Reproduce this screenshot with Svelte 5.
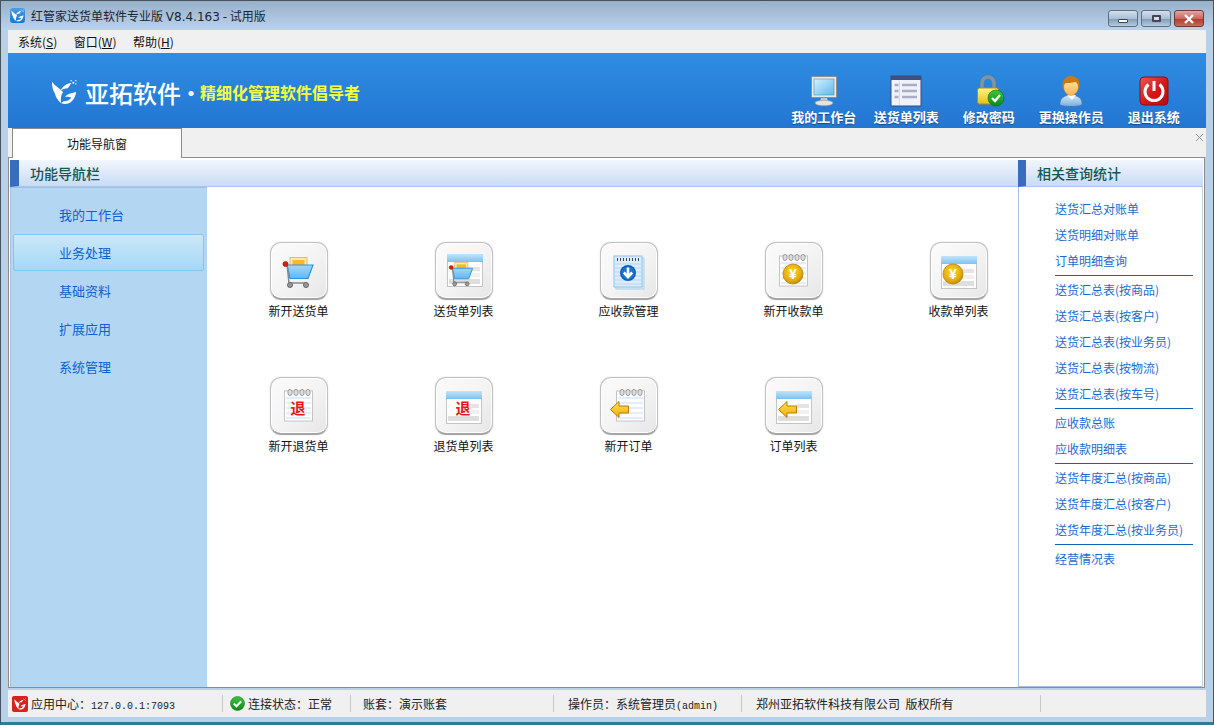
<script>
  const tools = [
    { id: 'monitor', label: '我的工作台' },
    { id: 'list', label: '送货单列表' },
    { id: 'lock', label: '修改密码' },
    { id: 'user', label: '更换操作员' },
    { id: 'power', label: '退出系统' }
  ]
  const navs = ['我的工作台', '业务处理', '基础资料', '扩展应用', '系统管理']
  const cards = [
    { id: 'cart', label: '新开送货单' },
    { id: 'cartlist', label: '送货单列表' },
    { id: 'receivable', label: '应收款管理' },
    { id: 'coinnote', label: '新开收款单' },
    { id: 'coinlist', label: '收款单列表' },
    { id: 'retnote', label: '新开退货单' },
    { id: 'retlist', label: '退货单列表' },
    { id: 'ordernote', label: '新开订单' },
    { id: 'orderlist', label: '订单列表' }
  ]
  const groups = [
    ['送货汇总对账单', '送货明细对账单', '订单明细查询'],
    ['送货汇总表(按商品)', '送货汇总表(按客户)', '送货汇总表(按业务员)', '送货汇总表(按物流)', '送货汇总表(按车号)'],
    ['应收款总账', '应收款明细表'],
    ['送货年度汇总(按商品)', '送货年度汇总(按客户)', '送货年度汇总(按业务员)'],
    ['经营情况表']
  ]
</script>

{#snippet logoMark(size, fg)}
  <svg width={size} height={size} viewBox="0 0 28 28">
    <path d="M1 3c0 5 1 9 3 12 1 4 3 8 7 11-1-5 0-9 2-12-3-3-8-6-12-11z" fill={fg} />
    <path d="M10 13C12 8 17 5 22 4c-2 3-3 5-4 6-3 0-6 1-8 3z" fill={fg} />
    <path d="M11 26c7 3 15-2 16-12-4 1-9 2-12 5 3 0 5 0 7 1-2 3-5 4-8 4-1 0-2 1-3 2z" fill={fg} />
    <path d="M23 3h2v2h-2zM26 1h1.500v1.500H26zM26 4.500h1.500V6H26zM21 1h1.500v1.500H21z" fill={fg} opacity="0.8" />
  </svg>
{/snippet}

{#snippet note(x, y)}
  <g transform="translate({x} {y})">
    <rect x="0.5" y="2" width="28" height="30" fill="#fff" stroke="#c4c4c4" />
    <path d="M2 9h25M2 14h25M2 19h25M2 24h25M2 29h25" stroke="#c5dcf8" stroke-width="1.2" />
    <g fill="#ddd" stroke="#9a9a9a" stroke-width="1">
      <rect x="4" y="0.5" width="4" height="6" rx="2" />
      <rect x="10" y="0.5" width="4" height="6" rx="2" />
      <rect x="16" y="0.5" width="4" height="6" rx="2" />
      <rect x="22" y="0.5" width="4" height="6" rx="2" />
    </g>
  </g>
{/snippet}

{#snippet sheet(x, y)}
  <g transform="translate({x} {y})">
    <rect x="0.5" y="0.5" width="35" height="32" fill="#fff" stroke="#c4c4c4" />
    <rect x="0" y="0" width="36" height="8" fill="url(#sheetHead)" />
    <rect x="20" y="13" width="13" height="4" fill="#e4e4e4" />
    <rect x="20" y="19" width="13" height="4" fill="#f0f0f0" />
    <rect x="2" y="25" width="31" height="5" fill="#dedede" />
  </g>
{/snippet}

{#snippet coin(cx, cy, r)}
  <circle cx={cx} cy={cy} r={r} fill="url(#coinFill)" stroke="#b68300" stroke-width="0.8" />
  <text x={cx} y={cy + r * 0.5} text-anchor="middle" class="coin-txt" font-size={r * 1.4}>¥</text>
{/snippet}

{#snippet arrow(x, y)}
  <path transform="translate({x} {y})" d="M0.5 8.5 9 0.5v4.500h9.500v7H9V16.500z" fill="url(#arrowFill)" stroke="#b87a00" />
{/snippet}

{#snippet cartShape(x, y, s)}
  <g transform="translate({x} {y}) scale({s})">
    <rect x="6" y="0.500" width="17" height="10" fill="#ffe9a6" stroke="#e8b968" />
    <rect x="8.500" y="3" width="12" height="6" fill="#f9b82e" />
    <path d="M3 8H29L24 21.500H6z" fill="url(#cartFill)" stroke="#2a94e0" stroke-width="1.200" />
    <path d="M3 7 5 26H23" fill="none" stroke="#888" stroke-width="1.500" />
    <circle cx="1.500" cy="7" r="2.600" fill="#d8190f" stroke="#99210a" stroke-width="0.600" />
    <circle cx="6" cy="28" r="2.500" fill="#999" stroke="#666" />
    <circle cx="22" cy="28" r="2.500" fill="#999" stroke="#666" />
  </g>
{/snippet}

{#snippet cardIcon(id)}
  <svg width="58" height="58" viewBox="0 0 58 58">
    {#if id === 'cart'}
      {@render cartShape(14, 15, 1)}
    {:else if id === 'cartlist'}
      {@render sheet(12, 12)}
      <rect x="12" y="12" width="36" height="8" fill="url(#sheetHead)" />
      {@render cartShape(15, 20, 0.78)}
    {:else if id === 'receivable'}
      <rect x="16" y="16" width="28" height="31" fill="#d7ecfb" stroke="#a9d3ef" />
      <rect x="14" y="14" width="28" height="31" fill="#dcecfa" stroke="#8ec2e8" />
      <path d="M15 22h26M15 26h26M15 30h26M15 34h26M15 38h26M15 42h26" stroke="#bcd6f0" />
      <path d="M17 17.500h22" stroke="#445" stroke-dasharray="1 2" stroke-width="3" />
      <circle cx="28" cy="31" r="8" fill="#0d5fb8" />
      <circle cx="28" cy="31" r="6.500" fill="#1a78d2" />
      <path d="M28 25.500v8M23.800 30.500l4.200 4.500 4.200-4.500" fill="none" stroke="#fff" stroke-width="2.600" />
    {:else if id === 'coinnote'}
      {@render note(14, 12)}
      {@render coin(28, 32, 10)}
    {:else if id === 'coinlist'}
      {@render sheet(11, 14)}
      {@render coin(23, 32, 10)}
    {:else if id === 'retnote'}
      {@render note(14, 12)}
      <text x="28" y="37" text-anchor="middle" class="ret-txt">退</text>
    {:else if id === 'retlist'}
      {@render sheet(11, 14)}
      <text x="28" y="37" text-anchor="middle" class="ret-txt">退</text>
    {:else if id === 'ordernote'}
      {@render note(16, 12)}
      {@render arrow(10, 24)}
    {:else}
      {@render sheet(11, 14)}
      {@render arrow(13, 24)}
    {/if}
  </svg>
{/snippet}

{#snippet toolIcon(id)}
  <svg width="32" height="32" viewBox="0 0 32 32">
    {#if id === 'monitor'}
      <rect x="3.500" y="1.500" width="25" height="21" rx="1" fill="#e8e8e8" stroke="#8f8f8f" />
      <rect x="6" y="4" width="20" height="16" fill="url(#screenFill)" stroke="#5a8fb0" stroke-width="0.600" />
      <path d="M13 23h6l1 3h-8z" fill="#c8c8c8" />
      <ellipse cx="16" cy="28" rx="9" ry="2.700" fill="#e4e4e4" stroke="#999" stroke-width="0.600" />
    {:else if id === 'list'}
      <rect x="1" y="1" width="30" height="30" fill="#f1f2f7" stroke="#3c4b7e" />
      <rect x="1" y="1" width="30" height="4" fill="#414f80" />
      <path d="M4.500 10h4M12 10h15M4.500 16h4M12 16h15M4.500 22h4M12 22h15" stroke="#a9adc8" stroke-width="2.400" />
      <path d="M9.500 6v24" stroke="#d8dae6" />
    {:else if id === 'lock'}
      <path d="M9 14V8a6 6 0 0 1 12 0v6" fill="none" stroke="#8b9399" stroke-width="3.400" />
      <rect x="4.500" y="13" width="21" height="16" rx="2" fill="url(#lockFill)" stroke="#b29000" />
      <circle cx="23" cy="23" r="8" fill="url(#okFill)" stroke="#0a6a12" stroke-width="0.600" />
      <path d="M19 23l3 3 5-6" fill="none" stroke="#fff" stroke-width="2.200" />
    {:else if id === 'user'}
      <path d="M5 30c-1-7 5-10 11-10s12 3 11 10c-6 2-16 2-22 0z" fill="url(#userBody)" stroke="#3f73b0" stroke-width="0.800" />
      <path d="M12 20l5 5 4-5z" fill="#fff" />
      <ellipse cx="16" cy="11" rx="7.500" ry="9.500" fill="url(#skinFill)" stroke="#c8832a" stroke-width="0.500" />
      <path d="M8 14C6 6 10 1 16 1s10 5 8 13c-.5-3-1.500-6-3.500-7-4 1-7 1-10 1-1 1-2 3-2.500 6z" fill="#c97a12" />
    {:else}
      <rect x="2" y="2" width="28" height="28" rx="4" fill="url(#powerFill)" stroke="#8e0f0f" />
      <path d="M10.500 9.500a9 9 0 1 0 11 0" fill="none" stroke="#fff" stroke-width="3" />
      <path d="M16 6v10" stroke="#fff" stroke-width="3" />
    {/if}
  </svg>
{/snippet}

<svg class="defs" width="0" height="0">
  <defs>
    <linearGradient id="sheetHead" x1="0" y1="0" x2="0" y2="1"><stop offset="0" stop-color="#c2e4fb" /><stop offset="1" stop-color="#7cc2f2" /></linearGradient>
    <linearGradient id="cartFill" x1="0" y1="0" x2="0" y2="1"><stop offset="0" stop-color="#9fd8fb" /><stop offset="1" stop-color="#62b6f4" /></linearGradient>
    <radialGradient id="coinFill" cx="0.45" cy="0.4" r="0.65"><stop offset="0" stop-color="#ffd83a" /><stop offset="0.7" stop-color="#e5a90c" /><stop offset="1" stop-color="#b27c00" /></radialGradient>
    <linearGradient id="arrowFill" x1="0" y1="0" x2="0" y2="1"><stop offset="0" stop-color="#ffe45c" /><stop offset="1" stop-color="#f5a800" /></linearGradient>
    <linearGradient id="screenFill" x1="0" y1="0" x2="1" y2="1"><stop offset="0" stop-color="#d6f2ff" /><stop offset="1" stop-color="#5db9ea" /></linearGradient>
    <linearGradient id="lockFill" x1="0" y1="0" x2="0" y2="1"><stop offset="0" stop-color="#fff48a" /><stop offset="1" stop-color="#e3c116" /></linearGradient>
    <linearGradient id="okFill" x1="0" y1="0" x2="0" y2="1"><stop offset="0" stop-color="#3dc43d" /><stop offset="1" stop-color="#0a8a18" /></linearGradient>
    <linearGradient id="userBody" x1="0" y1="0" x2="0" y2="1"><stop offset="0" stop-color="#d5e9fa" /><stop offset="1" stop-color="#78aede" /></linearGradient>
    <linearGradient id="skinFill" x1="0" y1="0" x2="0" y2="1"><stop offset="0" stop-color="#fff0b8" /><stop offset="1" stop-color="#fcb34c" /></linearGradient>
    <linearGradient id="powerFill" x1="0" y1="0" x2="1" y2="1"><stop offset="0" stop-color="#e75a55" /><stop offset="0.55" stop-color="#d41616" /><stop offset="1" stop-color="#b30f0f" /></linearGradient>
  </defs>
</svg>

<div class="window">
  <header class="titlebar">
    <span class="app-badge">{@render logoMark(13, '#fff')}</span>
    <span class="title">红管家送货单软件专业版 V8.4.163 - 试用版</span>
    <div class="winbtns">
      <span class="wb"><i class="min"></i></span>
      <span class="wb"><i class="max"></i></span>
      <span class="wb close">
        <svg width="12" height="10" viewBox="0 0 12 10"><path d="M2 1l8 8M10 1l-8 8" stroke="#fff" stroke-width="2.400" /></svg>
      </span>
    </div>
  </header>

  <div class="inner">
    <nav class="menubar">
      <span>系统(<u>S</u>)</span>
      <span>窗口(<u>W</u>)</span>
      <span>帮助(<u>H</u>)</span>
    </nav>

    <div class="banner">
      <div class="brand">
        {@render logoMark(26, '#fff')}
        <span class="brand-name">亚拓软件</span>
        <span class="brand-dot">·</span>
        <span class="slogan">精细化管理软件倡导者</span>
      </div>
      <div class="tools">
        {#each tools as t}
          <div class="tool">
            {@render toolIcon(t.id)}
            <span>{t.label}</span>
          </div>
        {/each}
      </div>
    </div>

    <div class="tabstrip">
      <div class="tab">功能导航窗</div>
      <span class="tab-close">
        <svg width="9" height="9" viewBox="0 0 9 9"><path d="M1 1l7 7M8 1 1 8" stroke="#8a94a4" stroke-width="1" /></svg>
      </span>
    </div>

    <div class="content">
      <section class="center">
        <div class="panel-head wide"><span>功能导航栏</span></div>
        <div class="center-body">
          <aside class="navlist">
            {#each navs as n, i}
              <div class="navitem" class:active={i === 1}>{n}</div>
            {/each}
          </aside>
          <main class="main">
            {#each cards as c}
              <div class="card">
                <div class="card-btn">{@render cardIcon(c.id)}</div>
                <span>{c.label}</span>
              </div>
            {/each}
          </main>
        </div>
      </section>

      <aside class="right">
        <div class="panel-head"><span>相关查询统计</span></div>
        <div class="links">
          {#each groups as g, i}
            <div class="group" class:last={i === groups.length - 1}>
              {#each g as l}
                <div class="lnk">{l}</div>
              {/each}
            </div>
          {/each}
        </div>
      </aside>
    </div>

    <footer class="status">
      <div class="cell c1">
        <span class="red-badge">{@render logoMark(12, '#fff')}</span>
        <span>应用中心：<span class="mono">127.0.0.1:7093</span></span>
      </div>
      <div class="cell c2">
        <svg width="15" height="15" viewBox="0 0 15 15">
          <circle cx="7.500" cy="7.500" r="7" fill="url(#okFill)" stroke="#0a6a12" stroke-width="0.500" />
          <path d="M3.800 7.500l2.700 2.800 4.700-5" fill="none" stroke="#fff" stroke-width="2" />
        </svg>
        <span>连接状态：正常</span>
      </div>
      <div class="cell c3"><span>账套：演示账套</span></div>
      <div class="cell c4"><span>操作员：系统管理员<span class="mono">(admin)</span></span></div>
      <div class="cell c5"><span>郑州亚拓软件科技有限公司&nbsp;&nbsp;版权所有</span></div>
      <div class="cell c6"></div>
    </footer>
  </div>
</div>

<style>
  :global(body) {
    margin: 0;
    background: #b9d1e8;
  }
  .defs {
    position: absolute;
  }
  .window {
    width: 1214px;
    height: 725px;
    box-sizing: border-box;
    display: flex;
    flex-direction: column;
    overflow: hidden;
    border: 1px solid #46525c;
    border-bottom: 3px solid #2a7f95;
    background: #b9d1e8;
    font-family: "Noto Sans CJK SC", "Liberation Sans", sans-serif;
    font-size: 12px;
    color: #111;
  }
  .titlebar {
    height: 29px;
    flex: none;
    display: flex;
    align-items: center;
    padding: 0 9px;
    background: linear-gradient(#98b1cb, #bad2ea);
  }
  .app-badge {
    width: 15px;
    height: 15px;
    border-radius: 3px;
    background: linear-gradient(#4a9de8, #1877d0);
    display: flex;
    align-items: center;
    justify-content: center;
    margin-right: 6px;
  }
  .title {
    font-family: "DejaVu Sans", "Noto Sans CJK SC", sans-serif;
    font-size: 12px;
    word-spacing: -1px;
    color: #1b2430;
  }
  .winbtns {
    margin-left: auto;
    display: flex;
    gap: 3px;
    align-self: flex-start;
    margin-top: 9px;
  }
  .wb {
    width: 28px;
    height: 15px;
    border: 1px solid #5c6f85;
    border-radius: 3px;
    background: linear-gradient(#d4e0ec 0, #a9bfd6 50%, #7f9ab6 52%, #b5cbe0 100%);
    display: flex;
    align-items: center;
    justify-content: center;
  }
  .wb.close {
    background: linear-gradient(#e0a8a0 0, #c9685c 50%, #b03a2e 52%, #c76a5c 100%);
    border-color: #6e3b38;
  }
  .wb .min {
    width: 8px;
    height: 2px;
    background: #fff;
    border: 1px solid #445;
    margin-top: 4px;
    border-radius: 1px;
  }
  .wb .max {
    width: 5px;
    height: 3px;
    background: #cfdbe8;
    border: 2px solid #445;
    border-radius: 1px;
  }
  .inner {
    flex: 1;
    margin: 0 7px;
    padding-bottom: 5px;
    display: flex;
    flex-direction: column;
    min-height: 0;
  }
  .menubar {
    height: 23px;
    flex: none;
    background: #f0f0f0;
    display: flex;
    align-items: center;
    gap: 16.500px;
    padding-left: 10px;
    font-size: 12px;
  }
  .banner {
    height: 75px;
    flex: none;
    background: linear-gradient(#2f8de2, #2376d2);
    display: flex;
    align-items: stretch;
    justify-content: space-between;
  }
  .brand {
    display: flex;
    align-items: center;
    margin-left: 43px;
    margin-top: 3px;
    color: #fff;
  }
  .brand-name {
    font-size: 24px;
    font-weight: 500;
    margin-left: 8px;
  }
  .brand-dot {
    font-size: 20px;
    font-weight: 700;
    width: 19px;
    text-align: center;
  }
  .slogan {
    color: #f6ff3c;
    font-size: 16px;
    font-weight: 700;
  }
  .tools {
    display: flex;
    padding-right: 11px;
  }
  .tool {
    width: 82.500px;
    display: flex;
    flex-direction: column;
    align-items: center;
    padding-top: 22px;
    box-sizing: border-box;
    color: #fff;
    font-size: 13px;
    font-weight: 700;
    text-shadow: 0 1px 1px #15488a;
  }
  .tool span {
    line-height: 16px;
    margin-top: 2px;
    white-space: nowrap;
  }
  .tabstrip {
    height: 29px;
    flex: none;
    background: #f0f0f0;
    position: relative;
    padding-left: 4px;
  }
  .tab {
    position: relative;
    z-index: 1;
    width: 170px;
    height: 30px;
    box-sizing: border-box;
    background: #fff;
    border: 1px solid #8c8c8c;
    border-bottom: none;
    text-align: center;
    line-height: 30px;
    font-size: 12px;
  }
  .tab-close {
    position: absolute;
    right: 2px;
    top: 5px;
    line-height: 0;
  }
  .content {
    flex: 1;
    min-height: 0;
    display: flex;
    background: #fff;
    border: 1px solid #8c8c8c;
    border-top: none;
    margin-right: 1px;
    padding: 3px 1px 0;
    box-shadow: inset 0 1px 0 #8c8c8c;
  }
  .center {
    width: 1008px;
    flex: none;
    display: flex;
    flex-direction: column;
  }
  .center-body {
    flex: 1;
    min-height: 0;
    display: flex;
  }
  .panel-head {
    height: 27px;
    flex: none;
    box-sizing: border-box;
    border-left: 8px solid #3a6cbc;
    border-bottom: 1px solid #a9c4e8;
    background: linear-gradient(#f2f6fd, #c9dbf6);
    padding-left: 11px;
    display: flex;
    align-items: center;
    font-size: 14px;
    font-weight: 500;
    color: #14584f;
  }
  .panel-head.wide {
    border-left-width: 9px;
  }
  .navlist {
    width: 197px;
    flex: none;
    background: #b3d7f2;
    border-top: 1px solid #9ec1de;
    border-left: 1px solid #a9c4d8;
    padding-top: 8px;
    box-sizing: border-box;
  }
  .navitem {
    height: 38px;
    line-height: 38px;
    padding-left: 48px;
    box-sizing: border-box;
    font-size: 13px;
    color: #0f5fd2;
  }
  .navitem.active {
    margin: 0 3px 1px 2px;
    padding-left: 45px;
    line-height: 36px;
    height: 37px;
    border: 1px solid #83c7ee;
    border-radius: 2px;
    background: linear-gradient(#cde7f6, #a3d8f8);
  }
  .main {
    flex: 1;
    min-width: 0;
    display: grid;
    grid-template-columns: repeat(5, 165px);
    grid-auto-rows: 135px;
    align-content: start;
    padding: 55px 0 0 9px;
    box-sizing: border-box;
  }
  .card {
    display: flex;
    flex-direction: column;
    align-items: center;
    font-size: 12px;
  }
  .card span {
    margin-top: 2px;
    line-height: 17px;
    color: #111;
    white-space: nowrap;
  }
  .card-btn {
    width: 58px;
    height: 58px;
    box-sizing: border-box;
    border: 1px solid #c0c0c0;
    border-bottom: 2px solid #a6a6a6;
    border-radius: 11px;
    background: linear-gradient(135deg, #fbfbfb 0, #f4f4f4 50%, #e6e6e6 100%);
    box-shadow: 0 0 2px #ddd, inset 0 0 0 1px #fff;
    display: flex;
    align-items: center;
    justify-content: center;
  }
  .card-btn svg {
    margin: -1px;
    flex: none;
  }
  .coin-txt {
    font-family: "Liberation Sans", sans-serif;
    font-weight: 700;
    fill: #fff;
  }
  .ret-txt {
    font-family: "Noto Sans CJK SC", sans-serif;
    font-size: 15px;
    font-weight: 700;
    fill: #f01414;
  }
  .right {
    width: 185px;
    flex: none;
    display: flex;
    flex-direction: column;
  }
  .links {
    flex: 1;
    box-sizing: border-box;
    border: 1px solid #a9c0d8;
    border-right-color: #c5d4e4;
    border-top: none;
    padding: 9px 9px 0 36px;
  }
  .group {
    border-bottom: 1px solid #0f62b8;
    padding-bottom: 1px;
    margin-bottom: 1px;
  }
  .group.last {
    border-bottom: none;
  }
  .lnk {
    height: 26px;
    line-height: 26px;
    font-size: 12px;
    color: #1a6ad2;
    white-space: nowrap;
  }
  .status {
    height: 27px;
    flex: none;
    margin-top: 2px;
    background: #f0f0f0;
    display: flex;
    align-items: center;
    font-size: 12px;
    color: #222;
  }
  .cell {
    height: 17px;
    display: flex;
    align-items: center;
    gap: 3px;
    box-sizing: border-box;
    border-right: 1px solid #c8c8c8;
    white-space: nowrap;
    padding-left: 12px;
  }
  .c1 { width: 215px; padding-left: 4px; }
  .c2 { width: 128px; padding-left: 7px; }
  .c3 { width: 203px; }
  .c4 { width: 188px; padding-left: 14px; }
  .c5 { width: 299px; padding-left: 14px; }
  .c6 { border-right: none; flex: 1; }
  .mono {
    font-family: "Liberation Mono", monospace;
    font-size: 10px;
  }
  .red-badge {
    width: 16px;
    height: 16px;
    flex: none;
    border-radius: 2px;
    background: #d8231c;
    display: flex;
    align-items: center;
    justify-content: center;
  }
</style>
